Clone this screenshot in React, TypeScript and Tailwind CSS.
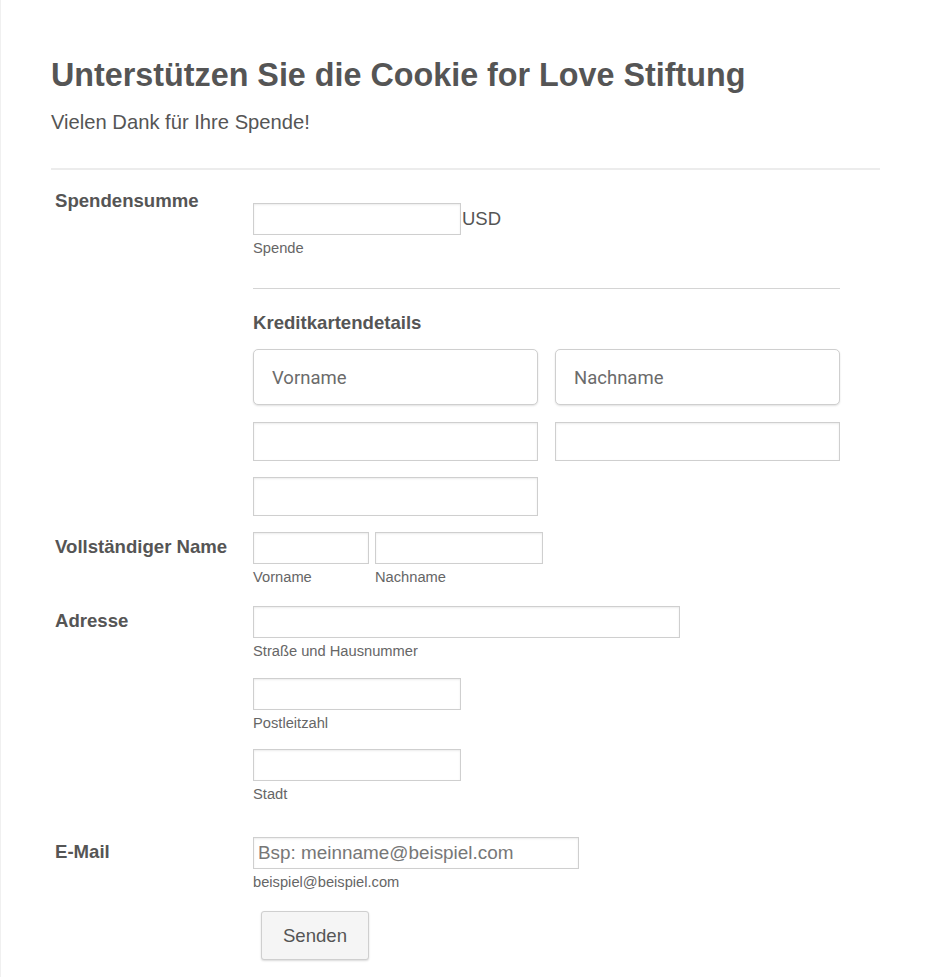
import React from "react";

const inputCls =
  "block h-[32px] border border-[#cfcfcf] bg-white shadow-[inset_0_1px_2px_rgba(0,0,0,0.08)]";

function Sub({ children, className = "" }: { children: React.ReactNode; className?: string }) {
  return (
    <div className={"mt-[5px] h-[16px] text-[14.7px] leading-[16px] text-[#666] " + className}>
      {children}
    </div>
  );
}

export default function App() {
  return (
    <div
      className="min-h-[977px] w-[930px] bg-white border-l border-[#f0f0f0]"
      style={{ fontFamily: '"Liberation Sans", Arial, sans-serif' }}
    >
      <div className="pl-[50px] pr-[50px] pt-[56px]">
        <h1 className="text-[32.3px] font-bold leading-[38px] text-[#555]">
          Unterstützen Sie die Cookie for Love Stiftung
        </h1>
        <p className="mt-[16px] text-[20.2px] leading-[24px] text-[#555]">
          Vielen Dank für Ihre Spende!
        </p>
        <div className="mt-[34px] h-[2px] w-[829px] bg-[#ececec]" />

        {/* Spendensumme */}
        <div className="mt-[20px] flex">
          <div className="w-[202px] pl-[4px] pt-[1px] text-[18.6px] font-bold leading-[20px] text-[#555]">
            Spendensumme
          </div>
          <div className="pt-[13px]">
            <div className="flex items-center">
              <div className={inputCls + " w-[208px] h-[32px]"} />
              <span className="ml-px text-[18.5px] text-[#555]">USD</span>
            </div>
            <Sub>Spende</Sub>
            <div className="mt-[32px] h-px w-[587px] bg-[#d4d4d4]" />
            <div className="mt-[24px] text-[18.6px] font-bold leading-[20px] text-[#555]">
              Kreditkartendetails
            </div>
            <div className="mt-[16px] grid grid-cols-[285px_285px] gap-x-[17px]">
              <div
                className="flex h-[56px] items-center rounded-[5px] border border-[#cfcfcf] bg-white pl-[18px] pt-[4px] text-[18.5px] text-[#6b6b6b] shadow-[0_1px_2px_rgba(0,0,0,0.12)]"
                style={{ fontFamily: "Roboto, sans-serif" }}
              >
                Vorname
              </div>
              <div
                className="flex h-[56px] items-center rounded-[5px] border border-[#cfcfcf] bg-white pl-[18px] pt-[4px] text-[18.5px] text-[#6b6b6b] shadow-[0_1px_2px_rgba(0,0,0,0.12)]"
                style={{ fontFamily: "Roboto, sans-serif" }}
              >
                Nachname
              </div>
              <div className={inputCls + " mt-[17px] h-[39px] w-[285px]"} />
              <div className={inputCls + " mt-[17px] h-[39px] w-[285px]"} />
              <div className={inputCls + " mt-[16px] h-[39px] w-[285px]"} />
            </div>
          </div>
        </div>

        {/* Vollständiger Name */}
        <div className="mt-[16px] flex">
          <div className="w-[202px] pl-[4px] pt-[5px] text-[18.6px] font-bold leading-[20px] text-[#555]">
            Vollständiger Name
          </div>
          <div className="flex gap-[6px]">
            <div>
              <div className={inputCls + " w-[116px]"} />
              <Sub>Vorname</Sub>
            </div>
            <div>
              <div className={inputCls + " w-[168px]"} />
              <Sub>Nachname</Sub>
            </div>
          </div>
        </div>

        {/* Adresse */}
        <div className="mt-[21px] flex">
          <div className="w-[202px] pl-[4px] pt-[5px] text-[18.6px] font-bold leading-[20px] text-[#555]">
            Adresse
          </div>
          <div>
            <div className={inputCls + " w-[427px]"} />
            <Sub>Straße und Hausnummer</Sub>
            <div className={inputCls + " mt-[19px] w-[208px]"} />
            <Sub>Postleitzahl</Sub>
            <div className={inputCls + " mt-[18px] w-[208px]"} />
            <Sub>Stadt</Sub>
          </div>
        </div>

        {/* E-Mail */}
        <div className="mt-[35px] flex">
          <div className="w-[202px] pl-[4px] pt-[5px] text-[18.6px] font-bold leading-[20px] text-[#555]">
            E-Mail
          </div>
          <div>
            <div
              className={
                inputCls +
                " w-[326px] flex items-center pl-[4px] text-[18.9px] text-[#777]"
              }
            >
              Bsp: meinname@beispiel.com
            </div>
            <Sub>beispiel@beispiel.com</Sub>
            <button className="ml-[8px] mt-[21px] flex h-[49px] w-[108px] items-center justify-center rounded-[3px] border border-[#cfcfcf] bg-[#f5f5f5] text-[18.6px] text-[#555] shadow-[0_1px_2px_rgba(0,0,0,0.15)]">
              Senden
            </button>
          </div>
        </div>
      </div>
    </div>
  );
}
